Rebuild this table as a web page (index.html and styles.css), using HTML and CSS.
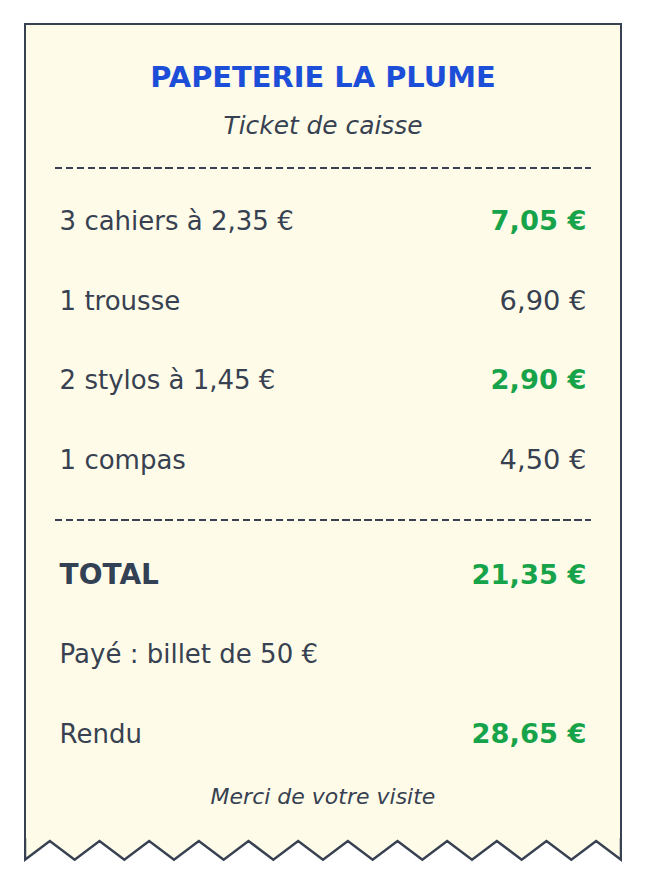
FILE: index.html
```html
<!DOCTYPE html>
<html lang="fr">
<head>
<meta charset="utf-8">
<title>Ticket de caisse</title>
<link rel="stylesheet" href="styles.css">
</head>
<body>
<div class="ticket">
  <div class="receipt">
    <h1 class="shop">PAPETERIE LA PLUME</h1>
    <p class="subtitle">Ticket de caisse</p>
    <div class="dash dash-top"></div>
    <div class="items">
      <div class="row"><span>3 cahiers à 2,35 €</span><span class="amount hl">7,05 €</span></div>
      <div class="row"><span>1 trousse</span><span class="amount">6,90 €</span></div>
      <div class="row"><span>2 stylos à 1,45 €</span><span class="amount hl">2,90 €</span></div>
      <div class="row"><span>1 compas</span><span class="amount">4,50 €</span></div>
    </div>
    <div class="dash dash-bottom"></div>
    <div class="totals">
      <div class="row"><span class="total-label">TOTAL</span><span class="amount hl">21,35 €</span></div>
      <div class="row"><span>Payé : billet de 50 €</span><span></span></div>
      <div class="row"><span>Rendu</span><span class="amount hl">28,65 €</span></div>
    </div>
    <p class="thanks">Merci de votre visite</p>
  </div>
  <svg class="tear" width="598" height="24" viewBox="0 0 598 24" xmlns="http://www.w3.org/2000/svg">
    <polygon fill="#fefce8" points="1,0 1,21.7 25.83,3 50.67,21.7 75.5,3 100.33,21.7 125.17,3 150,21.7 174.83,3 199.67,21.7 224.5,3 249.33,21.7 274.17,3 299,21.7 323.83,3 348.67,21.7 373.5,3 398.33,21.7 423.17,3 448,21.7 472.83,3 497.67,21.7 522.5,3 547.33,21.7 572.17,3 597,21.7 597,0"/>
    <polyline fill="none" stroke="#374151" stroke-width="2.5" stroke-linejoin="miter" points="1,0 1,21.7 25.83,3 50.67,21.7 75.5,3 100.33,21.7 125.17,3 150,21.7 174.83,3 199.67,21.7 224.5,3 249.33,21.7 274.17,3 299,21.7 323.83,3 348.67,21.7 373.5,3 398.33,21.7 423.17,3 448,21.7 472.83,3 497.67,21.7 522.5,3 547.33,21.7 572.17,3 597,21.7 597,0"/>
  </svg>
</div>
</body>
</html>
```
FILE: styles.css
```css
html, body {
  margin: 0;
  padding: 0;
  background: #ffffff;
}

body {
  font-family: "DejaVu Sans", "Liberation Sans", sans-serif;
  color: #374151;
}

.ticket {
  width: 598px;
  margin: 23px 0 0 24px;
}

.receipt {
  box-sizing: border-box;
  width: 598px;
  height: 815px;
  border: 2px solid #374151;
  border-bottom: 0;
  background: #fefce8;
  padding: 34px 28.7px 0;
}

.shop {
  margin: 0;
  font-size: 28.9px;
  line-height: 36px;
  font-weight: bold;
  color: #1d4ed8;
  text-align: center;
}

.subtitle {
  margin: 16px 0 0;
  font-size: 24.85px;
  line-height: 30px;
  font-style: italic;
  text-align: center;
}

.dash {
  height: 2px;
  background: repeating-linear-gradient(to right, #374151 0 7.3px, transparent 7.3px 11.05px);
}

.dash-top {
  margin-top: 26.1px;
}

.items {
  margin-top: 12.05px;
}

.dash-bottom {
  margin-top: 19.45px;
}

.totals {
  margin-top: 14.75px;
}

.row {
  display: flex;
  justify-content: space-between;
  align-items: baseline;
  height: 79.5px;
  line-height: 79.5px;
  padding: 0 4.9px;
  font-size: 26px;
  white-space: nowrap;
}

.amount {
  text-align: right;
  font-size: 27.3px;
}

.hl {
  color: #16a34a;
  font-weight: bold;
}

.total-label {
  font-weight: bold;
  font-size: 28px;
  color: #334155;
}

.thanks {
  margin: 9.6px 0 0;
  font-size: 22px;
  line-height: 28px;
  font-style: italic;
  text-align: center;
}

.tear {
  display: block;
}
```
